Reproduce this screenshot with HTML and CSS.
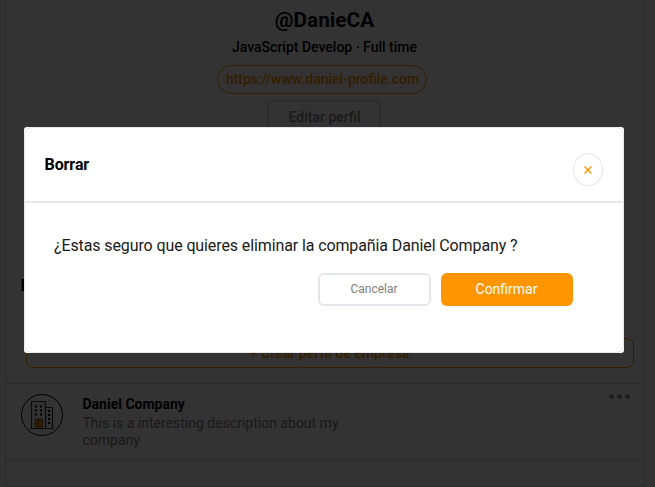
FILE: index.html
```
<!DOCTYPE html>
<html lang="es">
<head>
<meta charset="utf-8">
<title>Perfil</title>
<link rel="stylesheet" href="styles.css">
</head>
<body>
<main class="profile">
  <section class="intro">
    <h1 class="handle">@DanieCA</h1>
    <p class="role">JavaScript Develop · Full time</p>
    <a class="site">https://www.daniel-profile.com</a>
    <button class="edit">Editar perfil</button>
  </section>
  <section class="companies">
    <h2 class="heading">Empresas</h2>
    <button class="create">+ Crear perfil de empresa</button>
  </section>
  <article class="company">
    <div class="avatar">
      <svg width="24" height="30" viewBox="0 0 24 30">
        <g fill="none" stroke="#444" stroke-width="1.200">
          <path d="M1.500 28.500v-27h14v27M15.500 7.500h7v21M.5 28.500h23"/>
        </g>
        <path fill="#ff9500" stroke="#333" stroke-width=".7" d="M5 28v-9h7.500v9M8.750 19v9"/>
        <path fill="#000" d="M5 5.500h2v2H5zM10 5.500h2v2h-2zM5 9.500h2v2H5zM10 9.500h2v2h-2zM5 13.500h2v2H5zM10 13.500h2v2h-2zM18 10h2.200v2H18zM18 14h2.200v2H18zM18 18h2.200v2H18zM18 22h2.200v2H18z"/>
      </svg>
    </div>
    <div class="details">
      <h3 class="name">Daniel Company</h3>
      <p class="description">This is a interesting description about my company</p>
    </div>
    <div class="more"><i></i><i></i><i></i></div>
  </article>
</main>
<div class="overlay">
  <div class="modal">
    <div class="frame">
      <header class="modal-header">
        <h2 class="modal-title">Borrar</h2>
        <button class="close" aria-label="Cerrar">
          <svg width="8" height="8" viewBox="0 0 8 8"><path d="M.5.5l7 7M7.500.5l-7 7" stroke="#ff9500" stroke-width="1.400"/></svg>
        </button>
      </header>
      <div class="modal-body">
        <p class="question">¿Estas seguro que quieres eliminar la compañia Daniel Company ?</p>
        <div class="actions">
          <button class="cancel">Cancelar</button>
          <button class="confirm">Confirmar</button>
        </div>
      </div>
    </div>
  </div>
</div>
</body>
</html>
```
FILE: styles.css
```
* { box-sizing: border-box; }
body { margin: 0; background: #fff; font-family: Roboto, sans-serif; height: 487px; overflow: hidden; }
h1, h2, h3, p { margin: 0; }
button { font-family: inherit; background: #fff; padding: 0; }

.profile { width: 640px; height: 487px; margin-left: 5px; border: 1px solid #ddd; border-top: 0; }
.intro { display: flex; flex-direction: column; align-items: center; height: 272px; padding: 6px 5px 0 0; }
.handle { font-size: 20.800px; line-height: 28px; font-weight: 700; margin-left: 4px; }
.role { font-size: 14px; line-height: 20px; font-weight: 500; margin: 3px 0 8px 4px; }
.site { width: 210px; height: 29px; margin-right: 1px; padding-left: 1px; border: 1px solid #ff9500; border-radius: 15px; color: #ff9500; font-size: 14px; line-height: 27px; font-weight: 500; text-align: center; }
.edit { width: 114px; height: 36px; margin: 6px 0 0 3px; border: 2px solid #dcdce4; border-radius: 6px; color: #808080; font-size: 14px; font-weight: 500; padding: 0 0 2px 1px; }

.companies { height: 112px; padding: 4px 10px 0 15px; border-bottom: 1px solid #ddd; }
.heading { font-size: 16px; line-height: 19px; margin-left: -.5px; }
.create { display: block; width: 608px; height: 30px; margin: 43px 0 0 5px; padding-right: 1px; border: 1px solid #ff9500; border-radius: 7px; color: #ff9500; font-size: 14px; font-weight: 500; letter-spacing: .06px; }

.company { display: flex; height: 76px; padding: 10px 14px 0 15px; border-bottom: 1px solid #ddd; }
.avatar { display: flex; align-items: center; justify-content: center; width: 42px; height: 42px; border: 1px solid #000; border-radius: 50%; }
.details { width: 280px; margin-left: 19.500px; padding-top: 1px; }
.name { font-size: 14px; line-height: 18px; font-weight: 700; }
.description { color: #808080; font-size: 14px; line-height: 17px; margin-top: 2px; }
.more { display: flex; gap: 3px; margin-left: auto; }
.more i { width: 5px; height: 5px; border-radius: 50%; background: #999; }

.overlay { position: fixed; inset: 0; display: flex; align-items: center; justify-content: center; padding: 0 7px 7px 0; background: rgba(0, 0, 0, .8); }
.modal { width: 600px; height: 226px; background: #fff; border-radius: 3px; }
.frame { height: 100%; border: 1px solid #e6e6ea; border-radius: 8px; }
.modal-header { display: flex; justify-content: space-between; height: 75px; padding: 25px 20px 0 19.500px; border-bottom: 2px solid #e6e6ea; }
.modal-title { font-size: 16px; line-height: 24px; font-weight: 700; letter-spacing: -.08px; }
.close { display: flex; align-items: center; justify-content: center; width: 30px; height: 33px; border: 1px solid #e6e6ea; border-radius: 50%; }
.modal-body { padding: 32px 50px 0 29px; }
.question { color: #1a1a1a; font-size: 16px; line-height: 22px; letter-spacing: -.11px; }
.actions { display: flex; justify-content: flex-end; gap: 10px; margin-top: 16px; }
.cancel { width: 113px; height: 33px; border: 2px solid #e6e6ee; border-radius: 6px; color: #808080; font-size: 12px; padding: 0 1px 2px 0; }
.confirm { width: 132px; height: 33px; border: 0; border-radius: 6px; background: #ff9500; color: #fff; font-size: 14px; padding: 0 1px 1px 0; }
```
